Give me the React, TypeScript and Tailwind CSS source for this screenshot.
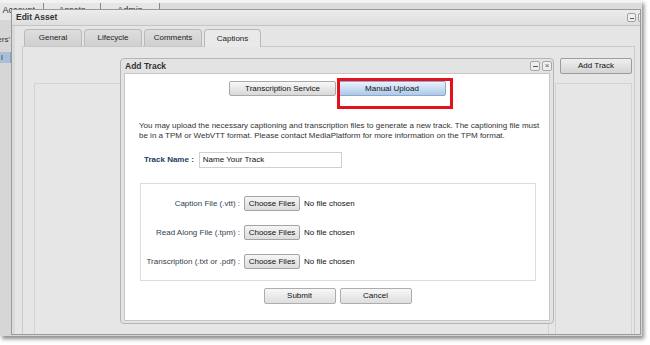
import React from 'react';

const btn =
  'flex items-center justify-center border text-[8px] leading-none text-[#111] rounded-[2px]';

const FileRow: React.FC<{ label: string }> = ({ label }) => (
  <div className="flex items-center h-[15px]">
    <span className="w-[99px] text-right text-[8px] text-[#33404f] whitespace-nowrap">{label}</span>
    <button
      className={`${btn} ml-[4px] w-[56px] h-[15px] border-[#a3a3a3] bg-gradient-to-b from-[#f6f6f6] to-[#dcdcdc]`}
    >
      Choose Files
    </button>
    <span className="ml-[4px] text-[8px] text-[#111] whitespace-nowrap">No file chosen</span>
  </div>
);

const AddTrackDialog: React.FC = () => (
  <div className="absolute left-[108px] top-[48px] w-[434px] h-[266px] flex flex-col border border-[#b5b5b5] rounded-[4px] bg-[#e3e3e3]">
    {/* Title bar */}
    <div className="h-[14px] flex items-center justify-between pl-[4px] pr-[1px]">
      <span className="text-[8.5px] font-bold text-[#333]">Add Track</span>
      <div className="flex gap-[2px] mt-[-1px]">
        <div className="w-[10px] h-[10px] border border-[#a8a8a8] rounded-[2px] bg-[#eeeeee] flex items-center justify-center">
          <div className="w-[5px] h-[1.5px] bg-[#555] mt-[2px]" />
        </div>
        <div className="w-[10px] h-[10px] border border-[#a8a8a8] rounded-[2px] bg-[#eeeeee] flex items-center justify-center text-[8px] leading-none text-[#555]">
          ×
        </div>
      </div>
    </div>

    {/* Body */}
    <div className="relative flex-1 mx-[3px] mb-[2px] bg-white border border-[#c6c6c6]">
      <div className="flex justify-center gap-[2px] mt-[7px] ml-[1px]">
        <button
          className={`${btn} w-[107px] h-[15px] border-[#a9a9a9] bg-gradient-to-b from-[#f8f8f8] to-[#d8d8d8]`}
        >
          Transcription Service
        </button>
        <button
          className={`${btn} w-[108px] h-[15px] border-[#8da8c8] bg-gradient-to-b from-[#e8f2fc] to-[#adc9ea]`}
        >
          Manual Upload
        </button>
      </div>
      {/* annotation box */}
      <div className="absolute left-[212px] top-[4px] w-[116px] h-[31px] border-[3px] border-[#e3121b]" />

      <p className="mt-[25px] pl-[14px] text-[8px] leading-[10px] text-[#333] whitespace-nowrap">
        You may upload the necessary captioning and transcription files to generate a new track. The captioning file must
        <br />
        be in a TPM or WebVTT format. Please contact MediaPlatform for more information on the TPM format.
      </p>

      <div className="flex items-center mt-[11px] pl-[19px]">
        <span className="text-[8px] font-bold text-[#1f3a68] whitespace-nowrap">Track Name :</span>
        <div className="ml-[5px] w-[143px] h-[16px] border border-[#d0d0d0] flex items-center pl-[3px] text-[8px] text-[#111]">
          Name Your Track
        </div>
      </div>

      <div className="mt-[15px] ml-[15px] w-[396px] h-[98px] border border-[#dddddd] pt-[12px] flex flex-col gap-[14px]">
        <FileRow label="Caption File (.vtt) :" />
        <FileRow label="Read Along File (.tpm) :" />
        <FileRow label="Transcription (.txt or .pdf) :" />
      </div>

      <div className="flex justify-center gap-[4px] mt-[7px] ml-[1px]">
        <button className={`${btn} w-[72px] h-[16px] border-[#adadad] bg-gradient-to-b from-[#f7f7f7] to-[#dedede]`}>
          Submit
        </button>
        <button className={`${btn} w-[72px] h-[16px] border-[#adadad] bg-gradient-to-b from-[#f7f7f7] to-[#dedede]`}>
          Cancel
        </button>
      </div>
    </div>
  </div>
);

const tabs = ['General', 'Lifecycle', 'Comments', 'Captions'];

export default function App() {
  return (
    <div className="w-[650px] h-[345px] bg-white font-['Liberation_Sans',Arial,sans-serif]">
      <div className="relative w-[642px] h-[336px] overflow-hidden bg-[#d6d6d6] shadow-[2px_3px_4px_rgba(0,0,0,0.45)]">
        {/* Underlying app header tabs */}
        <div className="flex h-[20px] bg-[#dcdcdc] border-t-[3px] border-[#f2f2f2]">
          <div className="w-[44px] h-full bg-[#e6e6e6] border-r border-[#888] flex justify-end pr-[8px] pt-[1px] text-[9px] text-[#333]">
            Account
          </div>
          <div className="w-[57px] h-full bg-[#e6e6e6] border-r border-[#888] flex justify-center pt-[1px] text-[9px] text-[#333]">
            Assets
          </div>
          <div className="w-[59px] h-full bg-[#e6e6e6] border-r border-[#888] flex justify-center pt-[1px] text-[9px] text-[#333]">
            Admin
          </div>
        </div>

        {/* Underlying app sidebar */}
        <div className="w-[11px] flex flex-col items-end overflow-hidden">
          <div className="mt-[14px] text-[8px] text-[#333] whitespace-nowrap pr-[1px]">Users'</div>
          <div className="mt-[6px] w-[11px] h-[11px] bg-[#a9bfd9] border-r border-[#8a9fb8] text-[8px] leading-[11px] text-[#333] pl-[1px]">
            l
          </div>
        </div>

        {/* Edit Asset window */}
        <div className="absolute left-[11px] top-[9px] right-[1px] bottom-[1px] flex flex-col border border-[#9a9a9a] bg-[#e5e5e5] overflow-hidden">
          <div className="h-[16px] shrink-0 flex items-center justify-between pl-[4px] bg-gradient-to-b from-[#ececec] to-[#dedede] border-b border-[#c4c4c4]">
            <span className="text-[8.5px] font-bold text-[#333]">Edit Asset</span>
            <div className="flex gap-[2px] mr-[-7px]">
              <div className="w-[9px] h-[9px] border border-[#a0a0a0] rounded-[2px] bg-[#eeeeee] flex items-center justify-center">
                <div className="w-[4px] h-[1.5px] bg-[#555] mt-[2px]" />
              </div>
              <div className="w-[9px] h-[9px] border border-[#a0a0a0] rounded-[2px] bg-[#eeeeee]" />
            </div>
          </div>

          <div className="flex-1 flex flex-col pl-[7px] pr-[5px] border-l-[3px] border-[#dadada]">
            {/* Tabs */}
            <div className="h-[20px] shrink-0 flex items-end gap-[2px] pl-[2px]">
              {tabs.map((t) => (
                <div
                  key={t}
                  className={
                    t === 'Captions'
                      ? 'w-[57px] h-[18px] flex items-center justify-center rounded-t-[4px] border border-b-0 border-[#b3b9c2] bg-[#e9e9e9] text-[8px] text-[#222] mb-[-1px] z-10'
                      : 'w-[58px] h-[17px] flex items-center justify-center rounded-t-[4px] border border-b-0 border-[#b9b9b9] bg-gradient-to-b from-[#dedede] to-[#d0d0d0] text-[8px] text-[#222]'
                  }
                >
                  {t}
                </div>
              ))}
            </div>

            {/* Content panel */}
            <div className="flex-1 flex gap-[6px] border-t border-l border-r border-[#c9c9c9] bg-[#e6e6e6] pt-[11px] pl-[11px] pr-[2px]">
              <div className="flex-1 flex flex-col pt-[25px]">
                <div className="flex-1 border-t border-l border-r border-[#d3d3d3]" />
              </div>
              <div className="w-[77px] flex flex-col">
                <button className={`${btn} ml-auto w-[72px] h-[16px] border-[#9c9c9c] rounded-[1px] bg-gradient-to-b from-[#efefef] to-[#d4d4d4]`}>
                  Add Track
                </button>
                <div className="flex-1 mt-[9px] border-t border-l border-r border-[#d3d3d3]" />
              </div>
            </div>
          </div>

          <AddTrackDialog />
        </div>
      </div>
    </div>
  );
}
